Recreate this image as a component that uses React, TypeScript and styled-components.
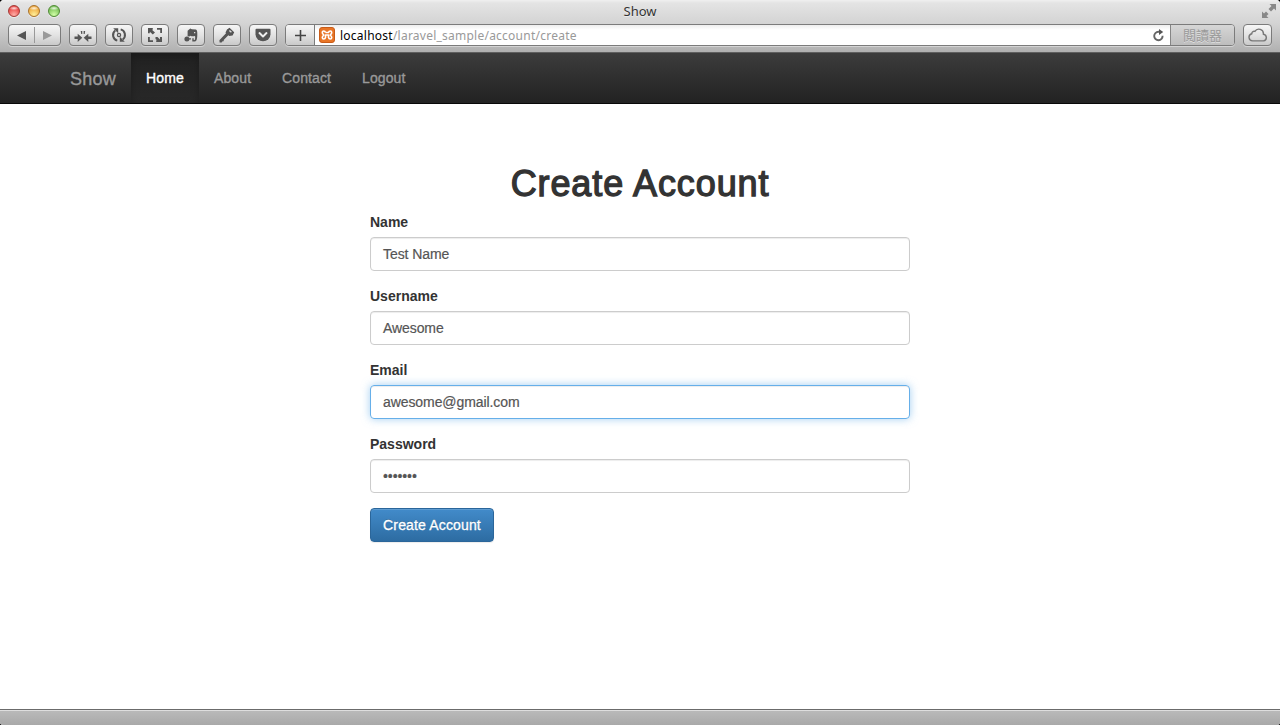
import React from "react";
import styled, { createGlobalStyle, css } from "styled-components";

const GlobalStyle = createGlobalStyle`
  * { box-sizing: border-box; }
  html, body { margin: 0; padding: 0; background: #000; overflow: hidden; }
`;

const sans = `"Helvetica Neue", "Liberation Sans", Arial, sans-serif`;
const chromeSans = `"Lucida Grande", "Noto Sans", "Noto Sans CJK TC", sans-serif`;

const BrowserWindow = styled.div`
  display: flex;
  flex-direction: column;
  width: 1280px;
  height: 725px;
  background: #fff;
  border-radius: 4px 4px 3px 3px;
  overflow: hidden;
  font-family: ${sans};
`;

const Chrome = styled.header`
  height: 53px;
  flex: none;
  background: linear-gradient(#f0f0f0, #e4e4e4 3px, #d3d3d3 24px, #b0b0b0 52px);
  border-bottom: 1px solid #5f5f5f;
`;

const TitleBar = styled.div`
  display: grid;
  grid-template-columns: 100px 1fr 100px;
  height: 24px;
`;

const Lights = styled.div`
  display: flex;
  gap: 8px;
  padding: 5px 0 0 8px;
`;

const Light = styled.span<{ $rim: string; $fill: string; $glow: string }>`
  width: 12px;
  height: 12px;
  border-radius: 50%;
  border: 1px solid ${(p) => p.$rim};
  background: radial-gradient(ellipse 5px 2px at 50% 22%, rgba(255, 255, 255, 0.85), transparent),
    radial-gradient(circle at 50% 88%, ${(p) => p.$glow}, ${(p) => p.$fill} 75%);
  box-shadow: 0 1px 0 rgba(255, 255, 255, 0.5);
`;

const Title = styled.div`
  text-align: center;
  font: 13px/23px ${chromeSans};
  color: #333;
  text-shadow: 0 1px 0 rgba(255, 255, 255, 0.5);
`;

const Expand = styled.div`
  display: flex;
  justify-content: flex-end;
  padding: 4px 4px 0 0;
`;

const Toolbar = styled.div`
  display: flex;
  gap: 8px;
  padding: 0 8px;
  height: 22px;
`;

const raised = css`
  background: linear-gradient(#f6f6f6, #e3e3e3 50%, #c9c9c9);
`;

const ToolButton = styled.div<{ $width?: number }>`
  ${raised}
  display: flex;
  align-items: center;
  justify-content: center;
  width: ${(p) => p.$width ?? 28}px;
  height: 22px;
  border: 1px solid #7b7b7b;
  border-radius: 4px;
  box-shadow: 0 1px 0 rgba(255, 255, 255, 0.4);
`;

const Half = styled.div`
  display: flex;
  flex: 1;
  height: 16px;
  align-items: center;
  justify-content: center;
  & + & { border-left: 1px solid #999; }
`;

const AddressBar = styled.div`
  display: flex;
  flex: 1;
  height: 22px;
  border: 1px solid #7b7b7b;
  border-radius: 4px;
  overflow: hidden;
  background: linear-gradient(#ededed, #fff 5px);
  box-shadow: 0 1px 0 rgba(255, 255, 255, 0.4);
`;

const AddButton = styled.div`
  ${raised}
  display: flex;
  width: 29px;
  align-items: center;
  justify-content: center;
  border-right: 1px solid #7b7b7b;
`;

const Address = styled.div`
  display: flex;
  flex: 1;
  align-items: center;
  gap: 5px;
  padding: 0 5px 0 4px;
`;

const Url = styled.div`
  flex: 1;
  padding-top: 1px;
  font: 12px/19px ${chromeSans};
  letter-spacing: 0.24px;
  color: #999;
  white-space: nowrap;
`;

const Host = styled.span`
  color: #000;
`;

const Reader = styled.div`
  width: 64px;
  border-left: 1px solid #858585;
  background: linear-gradient(#d6d6d6, #bdbdbd);
  color: #999;
  text-align: center;
  font: 13px/20px "Noto Sans CJK TC", sans-serif;
  text-shadow: 0 1px 0 #ddd;
`;

const Navbar = styled.nav`
  display: flex;
  flex: none;
  height: 51px;
  padding-left: 70px;
  background: linear-gradient(#3c3c3c, #222);
  border-bottom: 1px solid #080808;
`;

const Brand = styled.div`
  width: 61px;
  font-size: 18px;
  line-height: 52px;
  letter-spacing: 0.2px;
  color: #999;
  -webkit-text-stroke: 0.35px #999;
`;

const NavItem = styled.div<{ $width: number; $active?: boolean }>`
  width: ${(p) => p.$width}px;
  padding-left: 15px;
  font-size: 14px;
  line-height: 50px;
  letter-spacing: 0.12px;
  color: #999;
  -webkit-text-stroke: 0.35px currentColor;
  ${(p) =>
    p.$active &&
    css`
      color: #fff;
      background: linear-gradient(#222, #282828);
      box-shadow: inset 0 3px 9px rgba(0, 0, 0, 0.25);
    `}
`;

const Page = styled.main`
  flex: 1;
  background: #fff;
`;

const Form = styled.form`
  width: 540px;
  margin: 0 auto;
  padding-top: 60px;
  color: #333;
`;

const Heading = styled.h1`
  margin: 0 0 8px;
  font-size: 36px;
  line-height: 40px;
  font-weight: 400;
  letter-spacing: 0.9px;
  text-align: center;
  white-space: nowrap;
  -webkit-text-stroke: 1.3px #333;
`;

const Group = styled.div`
  margin-bottom: 15px;
`;

const Label = styled.div`
  margin-bottom: 5px;
  font-size: 14px;
  line-height: 20px;
  font-weight: 700;
`;

const Field = styled.div<{ $focused?: boolean }>`
  height: 34px;
  padding: 0 12px;
  border: 1px solid ${(p) => (p.$focused ? "#66afe9" : "#ccc")};
  border-radius: 4px;
  font-size: 14px;
  line-height: 32px;
  letter-spacing: -0.08px;
  color: #555;
  -webkit-text-stroke: 0.2px #555;
  box-shadow: inset 0 1px 1px rgba(0, 0, 0, 0.075)
    ${(p) => p.$focused && ", 0 0 8px rgba(102, 175, 233, 0.6)"};
`;

const Submit = styled.div`
  width: 124px;
  height: 34px;
  border: 1px solid #2b669a;
  border-radius: 4px;
  background: linear-gradient(#428bca, #2d6ca2);
  box-shadow: inset 0 1px 0 rgba(255, 255, 255, 0.15), 0 1px 1px rgba(0, 0, 0, 0.075);
  color: #fff;
  text-align: center;
  font-size: 14px;
  line-height: 32px;
  letter-spacing: 0.15px;
  white-space: nowrap;
  text-shadow: 0 -1px 0 rgba(0, 0, 0, 0.2);
  -webkit-text-stroke: 0.3px #fff;
`;

const StatusBar = styled.footer`
  flex: none;
  height: 16px;
  border-top: 1px solid #6b6b6b;
  background: linear-gradient(#dedede 1px, #b9b9b9 1px, #a9a9a9);
`;

const Icon = styled.svg`
  display: block;
  flex: none;
  fill: #555;
`;

const lights = [
  { rim: "#a33a36", fill: "#e8413f", glow: "#ffb0a8" },
  { rim: "#a9722a", fill: "#eda63a", glow: "#fff09a" },
  { rim: "#4f8a35", fill: "#74bd52", glow: "#d2ffa8" },
];

const fields = [
  { label: "Name", value: "Test Name" },
  { label: "Username", value: "Awesome" },
  { label: "Email", value: "awesome@gmail.com", focused: true },
  { label: "Password", value: "•••••••" },
];

const navItems = [
  { label: "Home", width: 68, active: true },
  { label: "About", width: 68 },
  { label: "Contact", width: 80 },
  { label: "Logout", width: 74 },
];

const Compress = () => (
  <Icon width="18" height="16" viewBox="0 0 18 16">
    <path d="M.5 9.6h3.2V6.7l4.6 4.1-4.6 4.1V12H.5zM17.5 9.6h-3.2V6.7l-4.6 4.1 4.6 4.1V12h3.2zM6.7 4h1.6v3H7.2zM9.6 4h1.6l-.5 3H9.6z" />
  </Icon>
);

const Sync = () => (
  <Icon width="16" height="16" viewBox="0 0 16 16">
    <g fill="none" stroke="#555" strokeWidth="2">
      <path d="M6.3 13.6A5.8 5.8 0 0 1 4.2 3.5" />
      <path d="M9.7 2.4a5.8 5.8 0 0 1 2.1 10.1" />
    </g>
    <path d="M2.2 1.2h5v5zM13.8 14.8h-5v-5z" />
    <circle cx="8" cy="8" r="1.6" fill="none" stroke="#555" strokeWidth="1.3" />
  </Icon>
);

const Frame = () => (
  <Icon width="16" height="16" viewBox="0 0 16 16">
    <path d="M1 1h4.8v1.7H4.9L8 5.5 5.8 7.6 2.8 4.8v1.4H1zM15 15h-5.8v-1.7h.8L8.5 12v-2h2l2.5 2.5V10h2zM10 1h5v5h-1.8V2.8H10zM1 10h1.8v3.2H6V15H1z" />
  </Icon>
);

const Elephant = () => (
  <Icon width="16" height="16" viewBox="0 0 16 16">
    <path d="M4.6 3.8L7.3 1.5l1.6.7 3.9.2c1.4.4 1.6 2.3 1.5 5.1 0 3.8-.5 6.9-2.3 6.9H9.3v-3.1h1.4v1.7h.9c.7-.5.7-2.8.4-4-1.6.5-3.8.4-4.4-.2-.7.7-1.8.8-3 .5z" />
    <circle cx="3.9" cy="12" r="2.5" />
    <path d="M5 11.3h3v1.2H5z" />
    <path d="M11 5h1.3v1.2H11z" fill="#ddd" />
  </Icon>
);

const Key = () => (
  <Icon width="16" height="16" viewBox="0 0 16 16">
    <path d="M8 2.4L10.5.7l4.7 4.5-1.6 3.2-3.3.6-.9-.8-4.5 4.6-.3 1.4-1.5.2-.4 1H.6l-.2-2.1 6.6-7-.5-.9z" />
    <path d="M10.4 3.4l2 1.9" stroke="#ddd" strokeWidth="1.4" />
  </Icon>
);

const Pocket = () => (
  <Icon width="16" height="16" viewBox="0 0 16 16">
    <path d="M1.5 1.8h13q1 0 1 1v4.5a7.5 6.9 0 0 1-15 0V2.8q0-1 1-1z" />
    <path d="M4.5 6.1L8 9.4l3.5-3.3" fill="none" stroke="#eee" strokeWidth="2" strokeLinecap="round" strokeLinejoin="round" />
  </Icon>
);

const Xampp = () => (
  <Icon width="16" height="16" viewBox="0 0 16 16">
    <rect x=".5" y=".5" width="15" height="15" rx="2.5" style={{ fill: "#e87526", stroke: "#c95c18" }} />
    <path
      d="M6.5 5.5C6 3.4 3.3 3.5 3.3 5.4c0 1.3.7 1.8 1.5 2.6-.8.8-1.5 1.3-1.5 2.6 0 1.9 2.7 2 3.2-.1V8h3v2.5c.5 2.1 3.2 2 3.2.1 0-1.3-.7-1.8-1.5-2.6.8-.8 1.5-1.3 1.5-2.6 0-1.9-2.7-2-3.2.1h-3"
      fill="none"
      stroke="#fff"
      strokeWidth="1.6"
      strokeLinejoin="round"
    />
  </Icon>
);

const App = () => (
  <>
    <GlobalStyle />
    <BrowserWindow>
      <Chrome>
        <TitleBar>
          <Lights>
            {lights.map((l) => (
              <Light key={l.fill} $rim={l.rim} $fill={l.fill} $glow={l.glow} />
            ))}
          </Lights>
          <Title>Show</Title>
          <Expand>
            <Icon width="14" height="14" viewBox="0 0 14 14" style={{ fill: "#888" }}>
              <path d="M7.5 0H14v6.5l-2-2-3 3L6.5 5l3-3zM0 7.5l2 2 2-2L6.5 10l-2 2 2 2H0z" />
            </Icon>
          </Expand>
        </TitleBar>
        <Toolbar>
          <ToolButton $width={53}>
            <Half>
              <Icon width="10" height="9" viewBox="0 0 10 9"><path d="M0 4.5L9 0v9z" /></Icon>
            </Half>
            <Half>
              <Icon width="10" height="9" viewBox="0 0 10 9" style={{ fill: "#999" }}><path d="M9 4.5L0 0v9z" /></Icon>
            </Half>
          </ToolButton>
          <ToolButton><Compress /></ToolButton>
          <ToolButton><Sync /></ToolButton>
          <ToolButton><Frame /></ToolButton>
          <ToolButton><Elephant /></ToolButton>
          <ToolButton><Key /></ToolButton>
          <ToolButton><Pocket /></ToolButton>
          <AddressBar>
            <AddButton>
              <Icon width="11" height="11" viewBox="0 0 11 11"><path d="M4.7 0h1.6v4.7H11v1.6H6.3V11H4.7V6.3H0V4.7h4.7z" style={{ fill: "#444" }} /></Icon>
            </AddButton>
            <Address>
              <Xampp />
              <Url><Host>localhost</Host>/laravel_sample/account/create</Url>
              <Icon width="13" height="13" viewBox="0 0 13 13">
                <path d="M10.6 6.8A4.2 4.2 0 1 1 6.4 2.8h1.4" fill="none" stroke="#666" strokeWidth="1.9" />
                <path d="M7 0l4.2 3L7 6z" />
              </Icon>
            </Address>
            <Reader>閱讀器</Reader>
          </AddressBar>
          <ToolButton $width={29}>
            <Icon width="20" height="14" viewBox="0 0 20 14">
              <path d="M4.6 12.9a3.6 3.6 0 0 1-.8-7.1 2.4 2.4 0 0 1 3.1-2.4 4.6 4.6 0 0 1 8.5 2.8 3.4 3.4 0 0 1 .2 6.7z" fill="none" stroke="#777" strokeWidth="1.4" />
            </Icon>
          </ToolButton>
        </Toolbar>
      </Chrome>
      <Navbar>
        <Brand>Show</Brand>
        {navItems.map((n) => (
          <NavItem key={n.label} $width={n.width} $active={n.active}>{n.label}</NavItem>
        ))}
      </Navbar>
      <Page>
        <Form>
          <Heading>Create Account</Heading>
          {fields.map((f) => (
            <Group key={f.label}>
              <Label>{f.label}</Label>
              <Field $focused={f.focused}>{f.value}</Field>
            </Group>
          ))}
          <Submit>Create Account</Submit>
        </Form>
      </Page>
      <StatusBar />
    </BrowserWindow>
  </>
);

export default App;
